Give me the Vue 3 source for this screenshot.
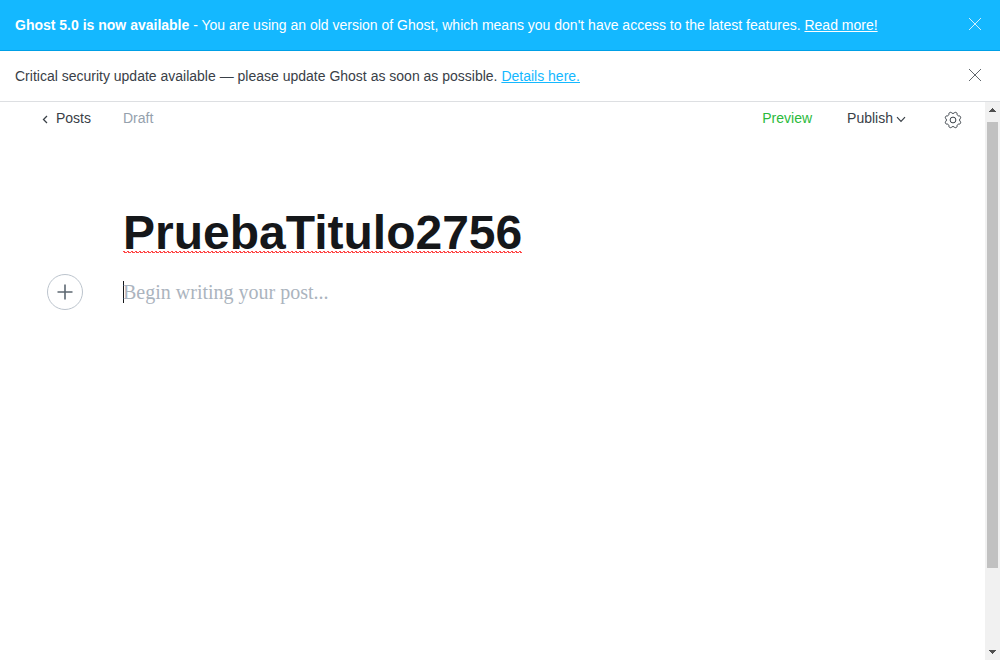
<script setup>
import { ref } from 'vue'

const title = ref('PruebaTitulo2756')
const body = ref('')
const showRelease = ref(true)
const showSecurity = ref(true)

// Eight rounded teeth with concave valleys between them.
function gearPath(teeth, radius, center) {
  const point = (deg) => {
    const a = (deg * Math.PI) / 180
    return `${(center + radius * Math.cos(a)).toFixed(2)} ${(center + radius * Math.sin(a)).toFixed(2)}`
  }
  const step = 360 / teeth
  let d = ''
  for (let i = 0; i < teeth; i++) {
    const mid = step * (i + 0.5)
    d += i === 0 ? `M${point(mid - 10)}` : `A2 2 0 0 0 ${point(mid - 10)}`
    d += `A1.6 1.6 0 0 1 ${point(mid + 10)}`
  }
  return `${d}A2 2 0 0 0 ${point(step / 2 - 10)}Z`
}
const gear = gearPath(8, 7.6, 9)
</script>

<template>
  <div class="app">
    <aside v-if="showRelease" class="alert alert-blue">
      <p><b>Ghost 5.0 is now available</b> - You are using an old version of Ghost, which means you don't have access to the latest features. <a href="#release">Read more!</a></p>
      <button type="button" aria-label="Dismiss release notice" @click="showRelease = false">
        <svg width="14" height="14" viewBox="0 0 14 14"><path d="M1 1l12 12M13 1L1 13" /></svg>
      </button>
    </aside>
    <aside v-if="showSecurity" class="alert alert-white">
      <p>Critical security update available — please update Ghost as soon as possible. <a href="#details">Details here.</a></p>
      <button type="button" aria-label="Dismiss security notice" @click="showSecurity = false">
        <svg width="14" height="14" viewBox="0 0 14 14"><path d="M1 1l12 12M13 1L1 13" /></svg>
      </button>
    </aside>

    <div class="workspace">
      <main class="editor">
        <header class="toolbar">
          <a class="back" href="#posts">
            <svg width="6" height="9" viewBox="0 0 6 9"><path d="M5 1L1.5 4.5 5 8" /></svg>
            Posts
          </a>
          <span class="status">Draft</span>
          <nav class="actions">
            <button type="button" class="preview">Preview</button>
            <button type="button" class="publish">
              Publish
              <svg width="10" height="7" viewBox="0 0 10 7"><path d="M1 1.2L5 5.4 9 1.2" /></svg>
            </button>
            <button type="button" class="settings" aria-label="Settings">
              <svg width="18" height="18" viewBox="0 0 18 18">
                <path :d="gear" />
                <circle cx="9" cy="9" r="2.9" />
              </svg>
            </button>
          </nav>
        </header>

        <section class="post">
          <div class="title">
            <input v-model="title" type="text" aria-label="Post title" spellcheck="false" />
            <svg class="squiggle" aria-hidden="true">
              <defs>
                <pattern id="wave" width="4" height="3" patternUnits="userSpaceOnUse">
                  <path d="M0 0h2v1h-2zM1 1h1v1h-1zM3 1h1v1h-1zM2 1h2v1h-2z" />
                </pattern>
              </defs>
              <rect width="100%" height="3" fill="url(#wave)" />
            </svg>
          </div>
          <div class="line">
            <button type="button" class="add" aria-label="Add a card">
              <svg width="16" height="16" viewBox="0 0 16 16"><path d="M8 .5v15M.5 8h15" /></svg>
            </button>
            <i class="caret"></i>
            <input v-model="body" type="text" aria-label="Post content" placeholder="Begin writing your post..." />
          </div>
        </section>
      </main>

      <div class="scrollbar" aria-hidden="true">
        <svg width="7" height="4" viewBox="0 0 7 4"><path d="M3 0h1v1h1v1h1v1h1v1H0V3h1V2h1V1h1z" /></svg>
        <div class="track"><div class="thumb"></div></div>
        <svg width="7" height="4" viewBox="0 0 7 4"><path d="M0 0h7v1H6v1H5v1H4v1H3V3H2V2H1V1H0z" /></svg>
      </div>
    </div>
  </div>
</template>

<style>
body {
  margin: 0;
  background: #fff;
}
</style>

<style scoped>
.app {
  display: flex;
  flex-direction: column;
  min-height: 100vh;
  color: #394047;
  font-family: "Liberation Sans", Arial, sans-serif;
  font-size: 14px;
  line-height: 20px;
}
button,
input {
  padding: 0;
  border: 0;
  background: none;
  color: inherit;
  font: inherit;
}
button {
  cursor: pointer;
}
input {
  outline: none;
}
svg {
  display: block;
  fill: none;
  stroke: currentColor;
}
.alert {
  display: flex;
  align-items: center;
  justify-content: space-between;
  padding: 15px 18px 15px 15px;
  border-bottom: 1px solid;
}
.alert p {
  margin: 0;
}
.alert button {
  margin-bottom: 2px;
}
.alert svg {
  stroke-width: 0.8;
}
.alert-blue {
  border-color: #00a0e6;
  background: #14b8ff;
  color: #fff;
}
.alert-white {
  border-color: #dddfe2;
}
.alert a {
  color: #14b8ff;
}
.alert-blue a {
  color: #fff;
}
.workspace {
  display: flex;
  flex: 1;
}
.editor {
  flex: 1;
}
.toolbar {
  display: flex;
  align-items: center;
  height: 32px;
  padding: 0 23px 0 42px;
}
.back {
  display: flex;
  align-items: center;
  gap: 8px;
  width: 81px;
  color: inherit;
  text-decoration: none;
}
.back svg {
  margin-top: 2px;
  stroke-width: 1.3;
}
.status {
  color: #95a1ad;
}
.actions {
  display: flex;
  align-items: center;
  margin-left: auto;
}
.preview {
  margin-right: 35px;
  color: #2bba3c;
}
.publish {
  display: flex;
  align-items: center;
  gap: 3px;
  margin-right: 38px;
}
.publish svg {
  margin-top: 2px;
  stroke-width: 1.2;
}
.settings {
  margin-top: 4px;
}
.post {
  padding: 70px 47px 0;
}
.title {
  position: relative;
  width: fit-content;
  margin-left: 76px;
}
.title input {
  display: block;
  field-sizing: content;
  height: 56px;
  color: #15171a;
  font-size: 48px;
  font-weight: 700;
}
.squiggle {
  position: absolute;
  bottom: 6px;
  left: 0;
  width: 100%;
  height: 3px;
  stroke: none;
}
.squiggle path {
  fill: #f44;
}
.line {
  display: flex;
  align-items: center;
  margin-top: 14px;
}
.add {
  display: grid;
  place-items: center;
  width: 36px;
  height: 36px;
  margin-right: 40px;
  border: 1px solid #bcc4cd;
  border-radius: 50%;
  color: #5d6872;
}
.add svg {
  stroke-width: 1.6;
}
.caret {
  width: 1px;
  height: 22px;
  margin-right: -1px;
  background: #15171a;
}
.line input {
  flex: 1;
  height: 32px;
  font-family: "Liberation Serif", Georgia, serif;
  font-size: 20px;
}
.line input::placeholder {
  color: #abb4be;
}
.scrollbar {
  display: flex;
  flex-direction: column;
  align-items: center;
  width: 15px;
  padding: 6px 0;
  background: #f1f1f1;
}
.scrollbar svg {
  fill: #505050;
  stroke: none;
}
.track {
  flex: 1;
  width: 11px;
  padding: 10px 0 3px;
}
.thumb {
  height: 85%;
  background: #c1c1c1;
}
</style>
